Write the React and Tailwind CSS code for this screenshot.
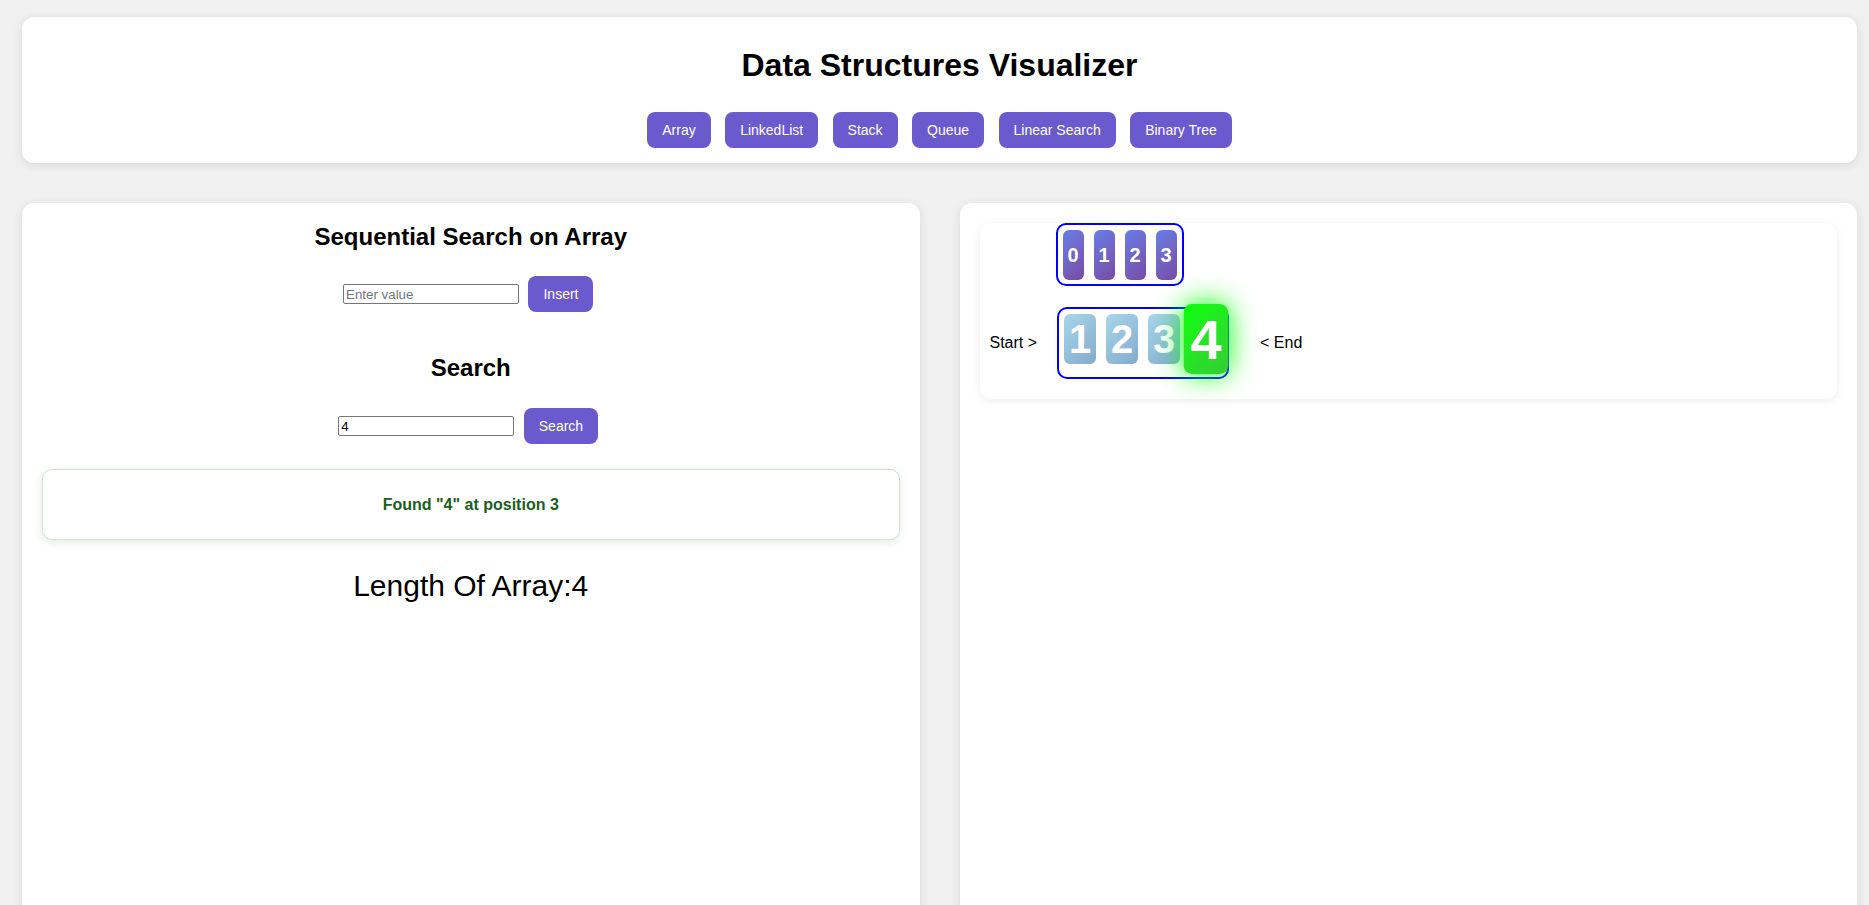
import React from 'react';

const navItems = ['Array', 'LinkedList', 'Stack', 'Queue', 'Linear Search', 'Binary Tree'];
const indexes = [0, 1, 2, 3];
const values = [1, 2, 3, 4];
const foundAt = 3;

const btn = 'bg-[#6a5acd] text-white text-[14px] leading-[16px] px-[15px] py-[10px] rounded-[8px]';

export default function App() {
    return (
        <div className="h-[905px] overflow-hidden bg-[#f0f0f0] pt-[17px] pl-[22px] pr-[12px] font-['Liberation_Sans',Arial,sans-serif] text-black">
            {/* Header */}
            <div className="bg-white rounded-[12px] shadow-[0_2px_10px_rgba(0,0,0,0.1)] pt-[30px] pb-[15px] text-center">
                <h1 className="text-[32px] leading-[37px] font-bold">Data Structures Visualizer</h1>
                <div className="mt-[28px] flex justify-center gap-[14.45px]">
                    {navItems.map((item) => (
                        <button key={item} className={btn}>{item}</button>
                    ))}
                </div>
            </div>

            {/* Panels */}
            <div className="mt-[40px] grid grid-cols-2 gap-[40px]">
                {/* Left panel */}
                <div className="bg-white rounded-[12px] shadow-[0_2px_10px_rgba(0,0,0,0.1)] p-[20px] h-[760px]">
                    <h2 className="text-[24px] leading-[28px] font-bold text-center">Sequential Search on Array</h2>
                    <div className="mt-[25px] flex justify-center items-center">
                        <input
                            type="text"
                            placeholder="Enter value"
                            className="w-[176px] h-[20px] border border-[#767676] rounded-[2px] px-[2px] text-[13.33px] placeholder-[#757575] outline-none"
                        />
                        <button className={btn + ' ml-[9.45px] mr-[5px]'}>Insert</button>
                    </div>

                    <h2 className="mt-[42px] text-[24px] leading-[28px] font-bold text-center">Search</h2>
                    <div className="mt-[26px] flex justify-center items-center">
                        <input
                            type="text"
                            defaultValue="4"
                            className="w-[176px] h-[20px] border border-[#767676] rounded-[2px] px-[2px] text-[13.33px] outline-none"
                        />
                        <button className={btn + ' ml-[9.45px] mr-[5px]'}>Search</button>
                    </div>

                    <div className="mt-[25px] h-[71px] border border-[#c8e6c9] rounded-[10px] shadow-[0_2px_8px_rgba(0,0,0,0.1)] flex items-center justify-center">
                        <p className="text-[16px] font-bold text-[#1b5e20]">Found "4" at position 3</p>
                    </div>

                    <p className="mt-[29px] text-[30px] leading-[34px] text-center">Length Of Array:4</p>
                </div>

                {/* Right panel */}
                <div className="bg-white rounded-[12px] shadow-[0_2px_10px_rgba(0,0,0,0.1)] p-[20px] h-[760px]">
                    <div className="rounded-[10px] shadow-[0_2px_8px_rgba(0,0,0,0.08)] pl-[10px] pb-[20px]">
                        {/* Index row */}
                        <div className="flex">
                            <div className="ml-[66px] flex border-2 border-[#0000ff] rounded-[10px]">
                                {indexes.map((i) => (
                                    <div
                                        key={i}
                                        className="m-[5px] mb-[4px] w-[21px] h-[50px] rounded-[6px] bg-linear-135 from-[#667eea] to-[#764ba2] text-white text-[20px] font-bold flex items-center justify-center"
                                    >
                                        {i}
                                    </div>
                                ))}
                            </div>
                        </div>

                        {/* Array row */}
                        <div className="mt-[21px] flex items-center">
                            <span className="text-[16px] mr-[20px]">Start &gt;</span>
                            <div className="flex items-start h-[72px] border-2 border-[#0000ff] rounded-[10px] px-[5px] gap-[10px]">
                                {values.map((v, idx) =>
                                    idx === foundAt ? (
                                        <div
                                            key={v}
                                            className="relative mt-[5px] w-[32px] h-[50px] rounded-[6px] bg-linear-135 from-[#00ff00] to-[#32cd32] text-white text-[40px] leading-none font-bold flex items-center justify-center scale-[1.4] shadow-[0_0_20px_#00ff00]"
                                        >
                                            {v}
                                        </div>
                                    ) : (
                                        <div
                                            key={v}
                                            className="mt-[5px] w-[32px] h-[50px] rounded-[6px] bg-linear-135 from-[#a8d6ea] to-[#84aace] text-white text-[40px] leading-none font-bold flex items-center justify-center"
                                        >
                                            {v}
                                        </div>
                                    )
                                )}
                            </div>
                            <span className="text-[16px] ml-[31px]">&lt; End</span>
                        </div>
                    </div>
                </div>
            </div>
        </div>
    );
}
